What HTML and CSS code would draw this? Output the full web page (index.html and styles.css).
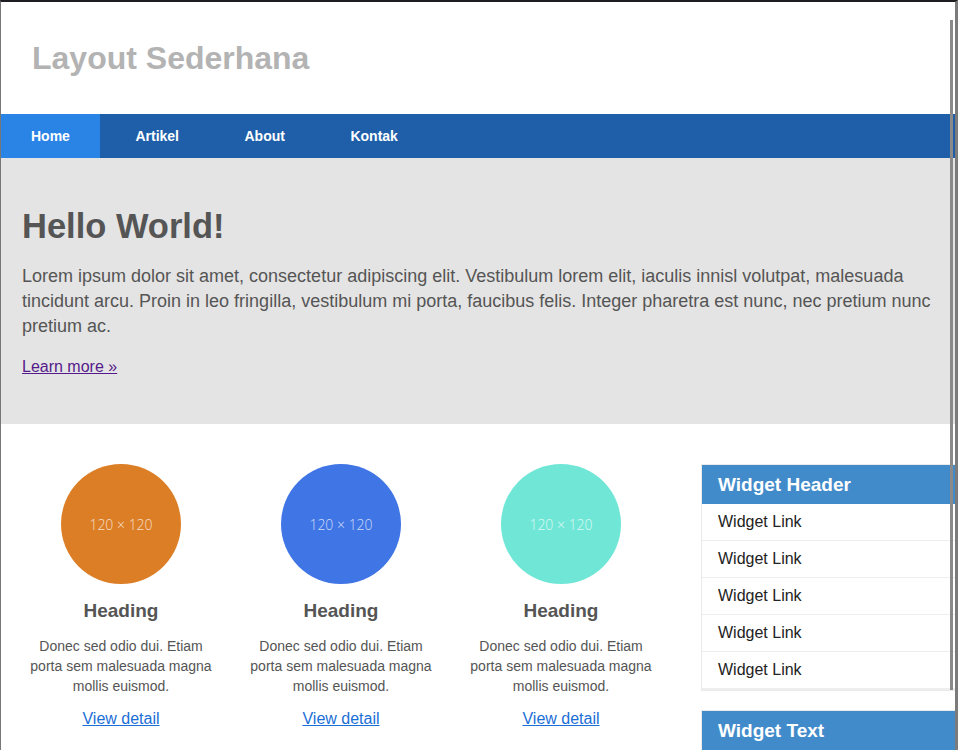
FILE: index.html
```html
<!DOCTYPE html>
<html lang="id">
<head>
<meta charset="utf-8">
<title>Layout Sederhana</title>
<link rel="stylesheet" href="styles.css">
</head>
<body>
<div class="frame">
  <header class="site-header">
    <h1 class="site-title">Layout Sederhana</h1>
  </header>
  <nav class="nav">
    <a class="nav-item active" href="#">Home</a>
    <a class="nav-item" href="#">Artikel</a>
    <a class="nav-item" href="#">About</a>
    <a class="nav-item" href="#">Kontak</a>
  </nav>
  <section class="hero">
    <h2 class="hero-title">Hello World!</h2>
    <p class="hero-text">Lorem ipsum dolor sit amet, consectetur adipiscing elit. Vestibulum lorem elit, iaculis innisl volutpat, malesuada tincidunt arcu. Proin in leo fringilla, vestibulum mi porta, faucibus felis. Integer pharetra est nunc, nec pretium nunc pretium ac.</p>
    <p class="hero-link"><a href="#" class="visited">Learn more »</a></p>
  </section>
  <div class="content">
    <div class="columns">
      <div class="col">
        <div class="circle orange">120 × 120</div>
        <h3 class="col-title">Heading</h3>
        <p class="col-text">Donec sed odio dui. Etiam porta sem malesuada magna mollis euismod.</p>
        <a class="col-link" href="#">View detail</a>
      </div>
      <div class="col">
        <div class="circle blue">120 × 120</div>
        <h3 class="col-title">Heading</h3>
        <p class="col-text">Donec sed odio dui. Etiam porta sem malesuada magna mollis euismod.</p>
        <a class="col-link" href="#">View detail</a>
      </div>
      <div class="col">
        <div class="circle teal">120 × 120</div>
        <h3 class="col-title">Heading</h3>
        <p class="col-text">Donec sed odio dui. Etiam porta sem malesuada magna mollis euismod.</p>
        <a class="col-link" href="#">View detail</a>
      </div>
    </div>
    <aside class="sidebar">
      <div class="widget">
        <h3 class="widget-header">Widget Header</h3>
        <ul class="widget-list">
          <li><a href="#">Widget Link</a></li>
          <li><a href="#">Widget Link</a></li>
          <li><a href="#">Widget Link</a></li>
          <li><a href="#">Widget Link</a></li>
          <li><a href="#">Widget Link</a></li>
        </ul>
      </div>
      <div class="widget">
        <h3 class="widget-header">Widget Text</h3>
        <p class="widget-body">Lorem ipsum dolor sit amet, consectetur adipiscing elit.</p>
      </div>
    </aside>
  </div>
  <div class="scroll-thumb"></div>
</div>
</body>
</html>
```
FILE: styles.css
```css
* { box-sizing: border-box; }
html, body { margin: 0; padding: 0; background: #fff; }
body { font-family: "Liberation Sans", Arial, sans-serif; color: #555; }

.frame {
  position: relative;
  width: 958px;
  height: 750px;
  overflow: hidden;
  border-top: 2px solid #1d1d22;
  border-left: 1px solid #777;
  border-right: 3px solid #7b7b7b;
}

.site-header {
  height: 112px;
  padding: 38px 0 0 31px;
}
.site-title {
  margin: 0;
  font-size: 32px;
  line-height: 37px;
  font-weight: bold;
  color: #b3b3b3;
}

.nav {
  display: flex;
  height: 44px;
  background: #1f5faa;
}
.nav-item {
  display: flex;
  align-items: center;
  padding: 0 30px;
  margin-right: 5.5px;
  color: #fff;
  font-weight: bold;
  font-size: 14px;
  text-decoration: none;
}
.nav-item.active { background: #2a84e6; }

.hero {
  height: 266px;
  background: #e4e4e4;
  padding: 48px 21px 0 21px;
}
.hero-title {
  margin: 0;
  font-size: 34.5px;
  line-height: 40px;
  font-weight: bold;
  color: #555;
}
.hero-text {
  margin: 18px 0 0;
  font-size: 18px;
  line-height: 25px;
  color: #555;
}
.hero-link {
  margin: 19px 0 0;
  font-size: 16px;
  line-height: 18px;
}
.hero-link a { color: #551a8b; }

.content {
  display: flex;
  padding: 40px 0 0 10px;
}
.columns {
  display: flex;
  width: 660px;
}
.col {
  width: 220px;
  padding: 0 15px;
  display: flex;
  flex-direction: column;
  align-items: center;
  text-align: center;
}
.circle {
  width: 120px;
  height: 120px;
  border-radius: 50%;
  display: flex;
  align-items: center;
  justify-content: center;
  font-family: "Open Sans", sans-serif;
  font-weight: 300;
  font-size: 14px;
  color: rgba(255,255,255,0.75);
}
.orange { background: #dc7e26; }
.blue { background: #3f75e4; }
.teal { background: #70e7d6; }

.col-title {
  margin: 15px 0 0;
  font-size: 19px;
  line-height: 23px;
  font-weight: bold;
  color: #555;
}
.col-text {
  margin: 14px 0 0;
  font-size: 14px;
  line-height: 20px;
  color: #555;
}
.col-link {
  margin-top: 14px;
  font-size: 16px;
  line-height: 18px;
  color: #1a6fd6;
}

.sidebar {
  margin-left: 30px;
  flex: 1;
}
.widget {
  border: 1px solid #eaeaea;
  border-right: 0;
  margin-bottom: 19px;
}
.widget-header {
  margin: 0;
  height: 39px;
  padding: 0 16px;
  background: #428bca;
  color: #fff;
  font-size: 19px;
  line-height: 39px;
  font-weight: bold;
}
.widget-list {
  list-style: none;
  margin: 0;
  padding: 0;
}
.widget-list li {
  border-bottom: 1px solid #eee;
  padding: 9px 16px;
  font-size: 16px;
  line-height: 18px;
}
.widget-list li:last-child { border-bottom-width: 2px; }
.widget-list a { color: #222; text-decoration: none; }
.widget-body { margin: 0; padding: 10px 16px; font-size: 16px; }

.scroll-thumb {
  position: absolute;
  right: 2px;
  top: 18px;
  width: 3px;
  height: 670px;
  background: #8a8a8a;
}
```
